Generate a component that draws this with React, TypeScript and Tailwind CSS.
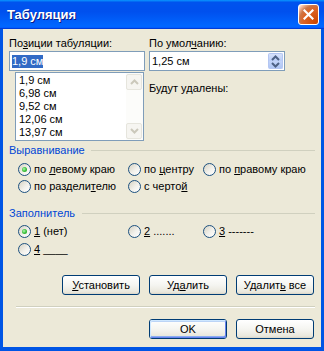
import React from "react";

function Radio({ checked, children, className }: { checked?: boolean; children: React.ReactNode; className?: string }) {
  return (
    <div className={"flex items-center " + (className ?? "")}>
      <span className="w-[13px] h-[13px] shrink-0 rounded-full border border-[#1c5180] bg-[linear-gradient(135deg,#d6d2c2,#f2f1ec_55%,#ffffff)] flex items-center justify-center">
        {checked && (
          <span className="w-[5px] h-[5px] rounded-full bg-[radial-gradient(circle_at_40%_40%,#b6f7b6,#3cc23c_50%,#1f9b1f)]" />
        )}
      </span>
      <span className="ml-[3px] leading-[13px] whitespace-nowrap">{children}</span>
    </div>
  );
}

function Btn({ children, def }: { children: React.ReactNode; def?: boolean }) {
  return (
    <div className="w-[78px] h-[20px] rounded-[3px] border border-[#003c74] bg-[linear-gradient(to_bottom,#ffffff,#f5f5f1_50%,#e9e7dc_90%,#d8d4c6)] flex items-center justify-center leading-[13px]">
      {def ? (
        <div className="w-full h-full rounded-[2px] shadow-[inset_1px_1px_0_#cee7ff,inset_-1px_-1px_0_#6982ee,inset_0_2px_0_#bcd4f6,inset_0_-2px_0_#89adf0] flex items-center justify-center">
          {children}
        </div>
      ) : (
        children
      )}
    </div>
  );
}

function Chevron({ up, color }: { up?: boolean; color: string }) {
  return (
    <svg width="9" height="6" viewBox="0 0 9 6">
      <path
        d={up ? "M1 5 L4.5 1.5 L8 5" : "M1 1 L4.5 4.5 L8 1"}
        fill="none"
        stroke={color}
        strokeWidth="2"
      />
    </svg>
  );
}

export default function App() {
  return (
    <div className="w-[324px] h-[351px] flex flex-col bg-[#0055e5] text-[11px] text-black font-['Liberation_Sans',Arial,sans-serif] overflow-hidden">
      {/* title bar */}
      <div className="h-[29px] shrink-0 flex items-center pl-[7px] pr-[5px] bg-[linear-gradient(180deg,#0997ff,#0053ee_8%,#0050ee_40%,#0066ff_88%,#0066ff_93%,#005bff_95%,#003dd7_96%,#003dd7)]">
        <span className="flex-1 text-white font-bold text-[13px] leading-[16px] [text-shadow:1px_1px_0_#0a1883]">
          Табуляция
        </span>
        <div className="w-[21px] h-[21px] rounded-[3px] border border-white bg-[radial-gradient(circle_at_90%_90%,#cc4600_0%,#dc6527_55%,#cd7546_70%,#ffccb2_90%,#ffffff_100%)] flex items-center justify-center">
          <svg width="11" height="11" viewBox="0 0 11 11">
            <path d="M1.5 1.5 L9.5 9.5 M9.5 1.5 L1.5 9.5" stroke="#ffffff" strokeWidth="2.2" strokeLinecap="square" />
          </svg>
        </div>
      </div>

      {/* client area */}
      <div className="flex-1 mx-[3px] mb-[4px] bg-[#ece9d8] flex flex-col">
        {/* top section */}
        <div className="mt-[8px] ml-[6px] flex gap-[4px]">
          <div className="w-[136px] flex flex-col">
            <div className="h-[13px] leading-[13px] whitespace-nowrap">
              По<u>з</u>иции табуляции:
            </div>
            <div className="mt-[1px] h-[20px] border border-[#7f9db9] bg-white flex items-center pl-[2px]">
              <span className="bg-[#316ac5] text-white leading-[13px]">1,9 см</span>
            </div>
            <div className="mt-[1px] ml-[6px] w-[129px] h-[69px] border border-[#7f9db9] bg-white flex">
              <div className="flex-1 pl-[3px] pt-[1px] flex flex-col">
                <div className="leading-[13px]">1,9 см</div>
                <div className="leading-[13px]">6,98 см</div>
                <div className="leading-[13px]">9,52 см</div>
                <div className="leading-[13px]">12,06 см</div>
                <div className="leading-[13px]">13,97 см</div>
              </div>
              <div className="w-[17px] pr-[1px] py-[1px] flex flex-col justify-between bg-[#fcfcfa]">
                <div className="w-[16px] h-[16px] rounded-[2px] border border-[#e6e5dd] bg-[#f6f5f1] flex items-center justify-center">
                  <Chevron up color="#cbc8bb" />
                </div>
                <div className="w-[16px] h-[16px] rounded-[2px] border border-[#e6e5dd] bg-[#f6f5f1] flex items-center justify-center">
                  <Chevron color="#cbc8bb" />
                </div>
              </div>
            </div>
          </div>
          <div className="w-[136px] flex flex-col">
            <div className="h-[13px] leading-[13px] whitespace-nowrap">
              По умол<u>ч</u>анию:
            </div>
            <div className="mt-[1px] h-[20px] border border-[#7f9db9] bg-white flex items-center pl-[2px] pr-[1px]">
              <span className="flex-1 leading-[13px]">1,25 см</span>
              <div className="w-[15px] h-[16px] flex flex-col">
                <div className="h-[8px] rounded-t-[2px] border border-b-0 border-[#b4c6f2] bg-[linear-gradient(to_bottom,#d6e1fb,#b9cdf7)] flex items-center justify-center">
                  <Chevron up color="#4d6185" />
                </div>
                <div className="h-[8px] rounded-b-[2px] border border-t-0 border-[#b4c6f2] bg-[linear-gradient(to_bottom,#c3d4f9,#afc6f5)] flex items-center justify-center">
                  <Chevron color="#4d6185" />
                </div>
              </div>
            </div>
            <div className="mt-[11px] leading-[13px] whitespace-nowrap">Будут удалены:</div>
          </div>
        </div>

        {/* Выравнивание */}
        <div className="mt-[3px] ml-[6px] mr-[6px] h-[13px] flex items-center">
          <span className="leading-[13px] text-[#0046d5]">Выравнивание</span>
          <div className="flex-1 ml-[6px] h-px bg-[#d0d0bf]" />
        </div>
        <div className="mt-[4px] pl-[15px] h-[17px] flex items-center">
          <Radio checked className="w-[110px]">
            по <u>л</u>евому краю
          </Radio>
          <Radio className="w-[75px]">
            по <u>ц</u>ентру
          </Radio>
          <Radio>
            по <u>п</u>равому краю
          </Radio>
        </div>
        <div className="pl-[15px] h-[17px] flex items-center">
          <Radio className="w-[110px]">
            по раздели<u>т</u>елю
          </Radio>
          <Radio>
            с черто<u>й</u>
          </Radio>
        </div>

        {/* Заполнитель */}
        <div className="mt-[12px] ml-[6px] mr-[6px] h-[13px] flex items-center">
          <span className="leading-[13px] text-[#0046d5]">Заполнитель</span>
          <div className="flex-1 ml-[7px] h-px bg-[#d0d0bf]" />
        </div>
        <div className="mt-[3px] pl-[15px] h-[17px] flex items-center">
          <Radio checked className="w-[110px]">
            <u>1</u> (нет)
          </Radio>
          <Radio className="w-[75px]">
            <u>2</u> .......
          </Radio>
          <Radio>
            <u>3</u> -------
          </Radio>
        </div>
        <div className="mt-[1px] pl-[15px] h-[17px] flex items-center">
          <Radio>
            <u>4</u> ____
          </Radio>
        </div>

        {/* action buttons */}
        <div className="mt-[17px] pr-[7px] flex justify-end gap-[9px]">
          <Btn>
            <span>
              <u>У</u>становить
            </span>
          </Btn>
          <Btn>
            <span>
              Уд<u>а</u>лить
            </span>
          </Btn>
          <Btn>
            <span>
              Удалит<u>ь</u> все
            </span>
          </Btn>
        </div>

        <div className="mt-[11px] ml-[13px] mr-[6px] h-[2px] border-t border-[#d0d0bf] border-b border-b-white" />

        <div className="mt-[11px] pr-[7px] flex justify-end gap-[9px]">
          <Btn def>OK</Btn>
          <Btn>Отмена</Btn>
        </div>
      </div>
    </div>
  );
}
